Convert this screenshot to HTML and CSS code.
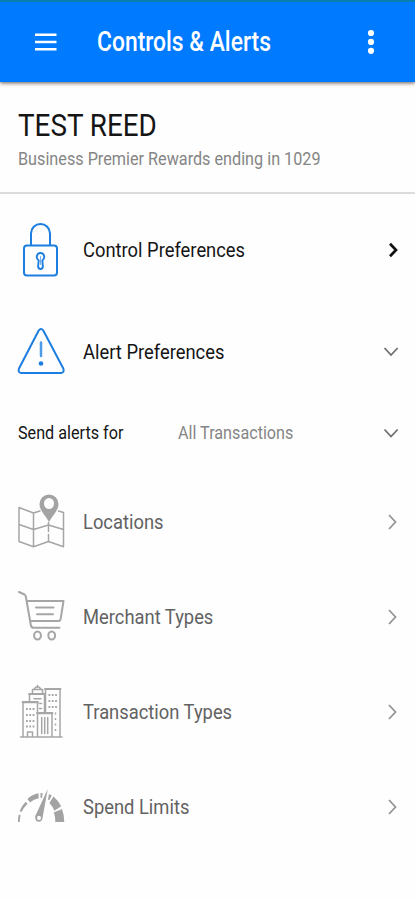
FILE: index.html
```html
<!DOCTYPE html>
<html lang="en">
<head>
<meta charset="utf-8">
<meta name="viewport" content="width=device-width, initial-scale=1">
<title>Controls &amp; Alerts</title>
<link rel="stylesheet" href="styles.css">
</head>
<body>
<header class="bar">
  <svg class="menu" viewBox="0 0 22 18"><path d="M0 1.800h21.500M0 9h21.500M0 16.200h21.500"/></svg>
  <h1 class="bar-title"><span class="squeeze">Controls &amp; Alerts</span></h1>
  <svg class="more" viewBox="0 0 8 26"><circle cx="4" cy="4" r="3.100"/><circle cx="4" cy="12.900" r="3.100"/><circle cx="4" cy="21.800" r="3.100"/></svg>
</header>
<section class="account">
  <h2 class="name"><span class="squeeze">TEST REED</span></h2>
  <p class="card"><span class="squeeze">Business Premier Rewards ending in 1029</span></p>
</section>
<main class="list">
  <div class="row primary">
    <svg class="icon blue" viewBox="16 220 52 60"><path d="M31 245v-11.500a9.500 9.500 0 0 1 19 0V245"/><rect x="24" y="245.500" width="33" height="30" rx="3"/><path d="M38.700 260.500c-3.600-2.700-1.700-7.500 1.800-7.500s5.400 4.800 1.800 7.500l.6 6q-.4 2.500-2.400 2.500t-2.400-2.500z" stroke-width="1.900"/><path d="M40.500 256.500v8" stroke-width=".6"/></svg>
    <span class="label"><span class="squeeze">Control Preferences</span></span>
    <svg class="arrow black" viewBox="0 0 16 16"><path d="M5 1.700L11 8l-6 6.300"/></svg>
  </div>
  <div class="row primary">
    <svg class="icon blue" viewBox="16 322 52 60"><path d="M38.700 330.500q2.300-3 4.600 0l20 38q1.500 4-2.300 4.500H21.300q-3.800-.5-2.300-4.500z"/><path class="soft" d="M41 342.500v13.500"/><circle class="solid" cx="41" cy="363.500" r="2.300"/></svg>
    <span class="label"><span class="squeeze">Alert Preferences</span></span>
    <svg class="arrow dark" viewBox="0 0 16 16"><path d="M-.5 4L6 11l6.700-7"/></svg>
  </div>
  <div class="row filter">
    <span class="filter-name"><span class="squeeze">Send alerts for</span></span>
    <span class="filter-value"><span class="squeeze">All Transactions</span></span>
    <svg class="arrow dark" viewBox="0 0 16 16"><path d="M-.5 4.500L6 11.500l6.700-7"/></svg>
  </div>
  <div class="group">
    <div class="row">
      <svg class="icon gray" viewBox="16 492.500 52 60"><path d="M40 511.500L33.500 513.500L19 508v34l14.500 5.200L48.500 542l15 5.200V513l-5-1.500M19 525l14.500 5 15-4.500 15 4.500M33.500 514v33"/><path d="M48.500 523v19" stroke-dasharray="9 3"/><path class="solid" fill-rule="evenodd" d="M49 522.500c-2.500-5.500-9.500-11-9.500-18a9.500 9.500 0 0 1 19 0c0 7-7 12.500-9.500 18zM49 498.500a5 5.500 0 1 0 0 11 5 5.500 0 0 0 0-11z"/></svg>
      <span class="label"><span class="squeeze">Locations</span></span>
      <svg class="arrow light" viewBox="0 0 16 16"><path d="M4 1l6.500 7L4 15"/></svg>
    </div>
    <div class="row">
      <svg class="icon gray" viewBox="16 587.500 52 60"><path class="thick" d="M19 592.500l5.500 2.500q1 .6 1.300 2l5 28.500q.5 2.800 3 2.800H59.500M26.500 601.500H63.500l-2.800 17.700q-.5 2.300-2.700 2.300H30M36 608h17.500M37 614.700h16"/><ellipse class="thick" cx="37.500" cy="636" rx="3.400" ry="4"/><ellipse class="thick" cx="51.700" cy="636" rx="3.400" ry="4"/></svg>
      <span class="label"><span class="squeeze">Merchant Types</span></span>
      <svg class="arrow light" viewBox="0 0 16 16"><path d="M4 1l6.500 7L4 15"/></svg>
    </div>
    <div class="row">
      <svg class="icon gray" viewBox="16 682.500 52 60"><path d="M20.500 737.500h41.500M23 737V703h14.500v10M29.500 702.500v-8h15v18M32.500 694v-4h10v4M34.500 689q3-3.500 6 0M37.500 688v-2M45.500 712v-22.500h14.500V737M37.500 737V714h14.500v23"/><path d="M22.500 702.500h15.500M45 689.500h15.500M29 694.500h15.500M37 713.500h15.500" stroke-width="1.800"/><path class="dots" d="M26 709.500h9M26 715.500h9M26 721.500h9M26 727h9M48.500 695.500h9M48.500 701.500h9M48.500 707.500h9"/><path d="M55.500 713v19" stroke-dasharray="2 3.500" stroke-linecap="butt"/><path d="M34 699.200h7M39.500 704h2M39.500 709h2M27.500 737v-4.500h5v4.500" stroke-width="1.500"/><path d="M41.700 718v16M44.700 718v16M47.700 718v16" stroke-width="1.500"/></svg>
      <span class="label"><span class="squeeze">Transaction Types</span></span>
      <svg class="arrow light" viewBox="0 0 16 16"><path d="M4 1l6.500 7L4 15"/></svg>
    </div>
    <div class="row">
      <svg class="icon gray" viewBox="16 777.500 52 60"><path class="solid" d="M18 822.500q-.2-4 .8-7.500l1.800.8q-.9 3.300-.8 6.700zM19.700 811.500q2.500-6 6-9.300l1.800 2q-4 4-6 8.300zM27.500 799.500q4.700-4.600 11-5.700l.2 5q-5 1-8.700 4.200zM40.500 793.500l2.200.2-.7 4.700-1.500-.1zM49 794.600l2.700 1.500-2.500 4.700-1.200-.8zM53.500 797q5 4.300 7.700 9.700l-6.800 4.500q-2-4.700-5-7.800zM62 809.500q2.300 6 2.300 13h-9q.2-5.500-1.500-9.500z"/><path class="solid" fill-rule="evenodd" d="M47.800 789.300L42.700 817.500q-.3 4.800-3.800 4.800t-3.700-4.300q0-2 1.300-4zM39 816.200a1.900 2.200 0 1 0 0 4.400 1.900 2.200 0 0 0 0-4.400z"/></svg>
      <span class="label"><span class="squeeze">Spend Limits</span></span>
      <svg class="arrow light" viewBox="0 0 16 16"><path d="M4 1l6.500 7L4 15"/></svg>
    </div>
  </div>
</main>
</body>
</html>
```

FILE: styles.css
```css
* { box-sizing: border-box; }

body {
  margin: 0;
  min-height: 900px;
  background: #fefefe;
  color: #151515;
  font-family: Roboto, "Liberation Sans", sans-serif;
  overflow-x: hidden;
}

h1, h2, p { margin: 0; font-weight: 400; white-space: nowrap; }
svg { display: block; flex: none; fill: none; overflow: visible; }

.squeeze {
  display: inline-block;
  transform: scaleX(.874);
  transform-origin: left center;
  white-space: nowrap;
}

.bar {
  display: flex;
  align-items: center;
  height: 82px;
  padding: 0 40px 0 35px;
  border-top: 2px solid #087fae;
  background: #007aff;
  color: #fff;
  box-shadow: 0 1px 4px rgba(60, 30, 20, .75);
}

.menu { width: 22px; height: 18px; stroke: #fff; stroke-width: 2.600; }
.bar-title { flex: 1; width: 0; margin-left: 40px; font-size: 27px; line-height: 32px; font-weight: 500; }
.bar-title .squeeze { transform: scaleX(.847); }
.more { width: 8px; height: 26px; fill: #fff; }

.account {
  height: 112px;
  padding: 26px 18px 0;
  border-bottom: 2px solid #dcdcdc;
}

.name { font-size: 31px; line-height: 36px; }
.name .squeeze { transform: scaleX(.897); }
.card { margin-top: 4px; font-size: 19px; line-height: 22px; color: #858585; }
.card .squeeze { transform: scaleX(.853); }

.list { padding-top: 5px; }

.row { display: flex; align-items: center; height: 95px; padding: 0 14px 0 16px; }
.primary { height: 102px; }
.filter { height: 60px; padding-left: 18px; font-size: 18.500px; }
.filter-name { width: 160px; }
.filter-value { flex: 1; color: #858585; }
.group { padding-top: 11px; color: #626262; }

.icon { width: 52px; height: 60px; stroke-linejoin: round; stroke-linecap: round; }
.blue { stroke: #1c7ee0; stroke-width: 2; }
.blue .solid { fill: #1c7ee0; stroke: none; }
.blue .soft { stroke: #4d9ae8; stroke-width: 2.500; }
.gray { stroke: #a6a6a6; stroke-width: 1.500; }
.gray .thick { stroke-width: 2; }
.gray .solid { fill: #a3a3a3; stroke: none; }
.gray .dots { stroke-width: 2; stroke-dasharray: 1.800 1.500; stroke-linecap: butt; }

.label { flex: 1; width: 0; margin-left: 15px; font-size: 21px; line-height: 26px; }

.arrow { width: 16px; height: 16px; stroke-width: 1.800; }
.black { stroke: #111; stroke-width: 2.700; }
.dark { stroke: #6f6f6f; }
.light { stroke: #949494; }
```
